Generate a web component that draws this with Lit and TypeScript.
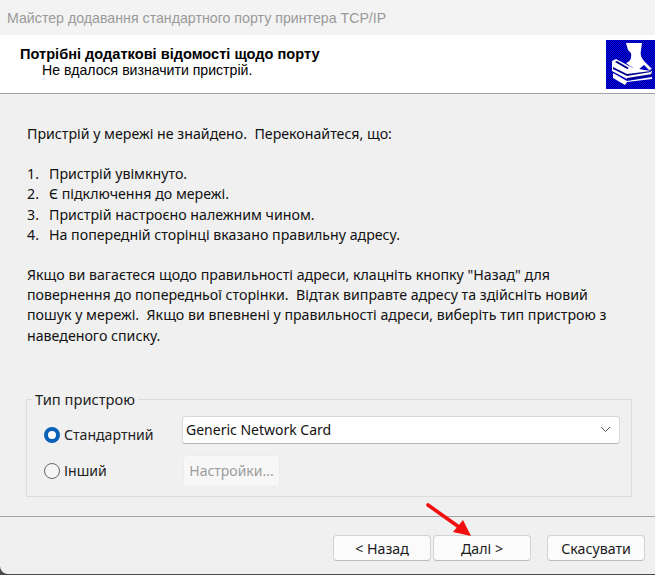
import { LitElement, html, css, svg } from "lit";
import { customElement } from "lit/decorators.js";

const items = [
  "Пристрій увімкнуто.",
  "Є підключення до мережі.",
  "Пристрій настроєно належним чином.",
  "На попередній сторінці вказано правильну адресу.",
];

@customElement("app-root")
export class AppRoot extends LitElement {
  static styles = css`
    :host { display: block; width: 655px; height: 575px; overflow: hidden; background: #4a4a4a; font-family: "Noto Sans", "Open Sans", sans-serif; color: #111; }
    .win { height: 574px; background: #f0f0f0; border-bottom-left-radius: 8px; display: flex; flex-direction: column; position: relative; overflow: hidden; }
    .title { height: 35px; flex: none; background: #f3f3f3; display: flex; align-items: center; padding-left: 7px; font: 14.2px "Liberation Sans", sans-serif; color: #9a9a9a; }
    .head { height: 59px; flex: none; box-sizing: border-box; background: #fff; border-bottom: 1px solid #a3a3a3; display: flex; justify-content: space-between; padding: 5px 0 0 20px; font-family: "Liberation Sans", sans-serif; color: #000; }
    .head b { display: block; font-size: 14.6px; line-height: 16px; margin-top: 6px; }
    .head span { display: block; padding-left: 22px; line-height: 16px; font-size: 14.1px; }
    .logo { width: 49px; height: 49px; flex: none; display: block; }
    .body { flex: 1; padding: 30px 27px 0 27px; font-size: 14.2px; line-height: 20.2px; }
    p { margin: 0; white-space: nowrap; }
    ol { list-style: none; margin: 20px 0; padding: 0; }
    li { display: flex; }
    li i { font-style: normal; width: 22px; flex: none; }
    fieldset { margin: 44px 0 0 -1px; width: 606px; height: 107px; box-sizing: border-box; border: 1px solid #dcdcdc; padding: 0; min-width: 0; display: block; }
    legend { margin-left: 5px; padding: 0 3px; font-size: 14.7px; line-height: 19px; color: #222; }
    .grid { display: grid; grid-template-columns: 138px 438px; grid-template-rows: 28px 32px; row-gap: 11px; padding: 7px 0 0 17px; align-items: center; }
    .radio { display: flex; align-items: center; gap: 4px; font-size: 14.1px; color: #222; }
    .radio.first { margin-top: 11px; }
    .dot { width: 16px; height: 16px; border-radius: 50%; box-sizing: border-box; border: 1px solid #666; background: #f5f5f5; flex: none; }
    .dot.on { border: 4.5px solid #0a62b8; background: #fff; }
    .select { height: 28px; box-sizing: border-box; background: #fff; border: 1px solid #d8d8d8; border-bottom-color: #b8b8b8; border-radius: 3px; display: flex; align-items: center; justify-content: space-between; padding: 0 8px 0 3px; font-size: 14px; }
    .select svg { width: 11px; height: 7px; }
    .disabled { width: 97px; height: 32px; box-sizing: border-box; margin-left: 1px; background: #f7f7f7; border: 1px solid #ececec; border-radius: 4px; color: #9c9c9c; font-size: 14px; display: flex; align-items: center; justify-content: center; }
    .foot { height: 58px; flex: none; border-top: 1px solid #a3a3a3; box-sizing: border-box; display: flex; padding: 18px 0 0 333px; }
    .btn { width: 98px; height: 26px; box-sizing: border-box; background: #fbfbfb; border: 1px solid #d2d2d2; border-bottom-color: #bcbcbc; border-radius: 4px; font-size: 14.2px; display: flex; align-items: center; justify-content: center; color: #1a1a1a; }
    .btn + .btn { margin-left: 2px; }
    .btn.cancel { margin-left: 16px; }
    .arrow { position: absolute; left: 425px; top: 502px; width: 50px; height: 36px; }
  `;

  render() {
    return html`<div class="win">
      <div class="title">Майстер додавання стандартного порту принтера TCP/IP</div>
      <div class="head">
        <div><b>Потрібні додаткові відомості щодо порту</b><span>Не вдалося визначити пристрій.</span></div>
        <svg class="logo" viewBox="0 0 49 49">
          <defs><pattern id="d" width="2" height="2" patternUnits="userSpaceOnUse"><rect width="2" height="2" fill="#00008a"/><rect width="1" height="1" fill="#0000ff"/><rect x="1" y="1" width="1" height="1" fill="#0000ff"/></pattern></defs>
          <rect width="49" height="49" fill="url(#d)"/>
          ${svg`<path fill="#fff" d="M20 3h16l-1 7c-1 4 0 8 3 11l8 8-3 1-5-5-6 5-8-4-4-3c3-1 5-3 5-6 1-4-1-5-3-7z"/>
          <path fill="#fff" d="M6 21l4-2 15 8 13 3 8 1-1 4-20 3-4 1-15-8z"/>
          <path fill="#00008a" d="M9 22l2-1 12 7-2 1zM7 27l14 7 24-3v1l-24 4-14-7z"/>
          <path fill="#fff" d="M7 33l14 8 25-4v2l-25 3-2 3-12-7z"/>
          <path fill="#00008a" d="M21 38l25-4v2l-25 4z"/>`}
        </svg>
      </div>
      <div class="body">
        <p>Пристрій у мережі не знайдено.&nbsp; Переконайтеся, що:</p>
        <ol>${items.map((t, i) => html`<li><i>${i + 1}.</i>${t}</li>`)}</ol>
        <p>Якщо ви вагаєтеся щодо правильності адреси, клацніть кнопку "Назад" для<br>повернення до попередньої сторінки.&nbsp; Відтак виправте адресу та здійсніть новий<br>пошук у мережі.&nbsp; Якщо ви впевнені у правильності адреси, виберіть тип пристрою з<br>наведеного списку.</p>
        <fieldset>
          <legend>Тип пристрою</legend>
          <div class="grid">
            <div class="radio first"><span class="dot on"></span>Стандартний</div>
            <div class="select">Generic Network Card
              <svg viewBox="0 0 11 7"><path d="M1 1l4.5 4.5L10 1" fill="none" stroke="#555" stroke-width="1"/></svg>
            </div>
            <div class="radio"><span class="dot"></span>Інший</div>
            <div class="disabled">Настройки...</div>
          </div>
        </fieldset>
      </div>
      <div class="foot">
        <div class="btn">&lt; Назад</div>
        <div class="btn">Далі &gt;</div>
        <div class="btn cancel">Скасувати</div>
      </div>
      <svg class="arrow" viewBox="0 0 50 36">
        <path d="M3 3L34 25" stroke="#f00e0e" stroke-width="3.6" stroke-linecap="round"/>
        <path d="M46 34L28 30L38 18z" fill="#f00e0e"/>
      </svg>
    </div>`;
  }
}
